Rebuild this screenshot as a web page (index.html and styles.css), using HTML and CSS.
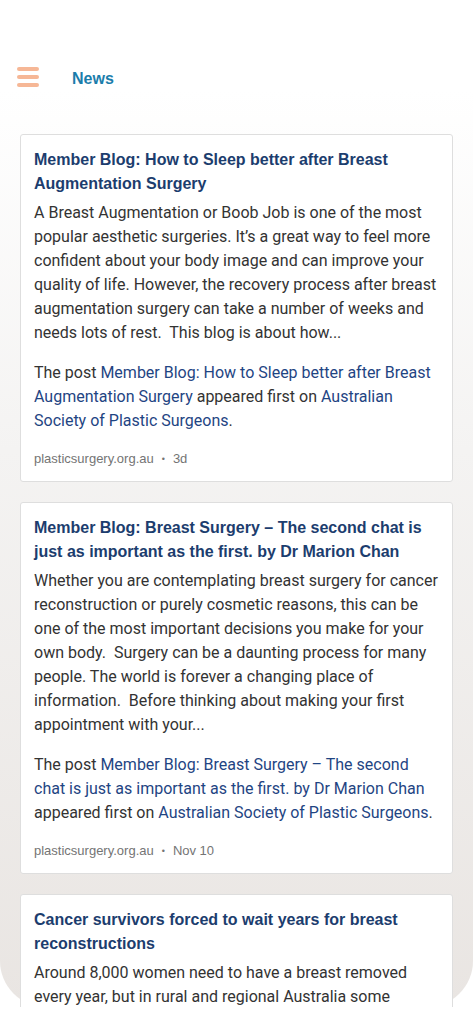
FILE: index.html
```html
<!DOCTYPE html>
<html lang="en">
<head>
<meta charset="utf-8">
<title>News</title>
<link rel="stylesheet" href="styles.css">
</head>
<body>
<div class="app">
  <header class="topbar">
    <span class="burger" aria-label="Menu"><i></i><i></i><i></i></span>
    <h1 class="page-title">News</h1>
  </header>
  <main class="feed">
    <article class="card">
      <h2 class="card-title">Member Blog: How to Sleep better after Breast Augmentation Surgery</h2>
      <p class="card-text">A Breast Augmentation or Boob Job is one of the most popular aesthetic surgeries. It’s a great way to feel more confident about your body image and can improve your quality of life. However, the recovery process after breast augmentation surgery can take a number of weeks and needs lots of rest.&nbsp; This blog is about how...</p>
      <p class="card-text post">The post <a href="#">Member Blog: How to Sleep better after Breast Augmentation Surgery</a> appeared first on <a href="#">Australian Society of Plastic Surgeons</a>.</p>
      <div class="meta"><span>plasticsurgery.org.au</span><span class="dot">•</span><span>3d</span></div>
    </article>
    <article class="card">
      <h2 class="card-title">Member Blog: Breast Surgery – The second chat is just as important as the first. by Dr Marion Chan</h2>
      <p class="card-text">Whether you are contemplating breast surgery for cancer reconstruction or purely cosmetic reasons, this can be one of the most important decisions you make for your own body.&nbsp; Surgery can be a daunting process for many people. The world is forever a changing place of information.&nbsp; Before thinking about making your first appointment with your...</p>
      <p class="card-text post">The post <a href="#">Member Blog: Breast Surgery – The second chat is just as important as the first. by Dr Marion Chan</a> appeared first on <a href="#">Australian Society of Plastic Surgeons</a>.</p>
      <div class="meta"><span>plasticsurgery.org.au</span><span class="dot">•</span><span>Nov 10</span></div>
    </article>
    <article class="card">
      <h2 class="card-title">Cancer survivors forced to wait years for breast reconstructions</h2>
      <p class="card-text">Around 8,000 women need to have a breast removed every year, but in rural and regional Australia some women must wait years for surgery if they're lucky enough to get it at all...</p>
    </article>
  </main>
</div>
</body>
</html>
```
FILE: styles.css
```css
html, body {
  margin: 0;
  padding: 0;
  background: #ffffff;
}
body {
  font-family: Roboto, "Liberation Sans", Arial, sans-serif;
  color: #333333;
}
.app {
  height: 1007px;
  background: linear-gradient(to bottom, #ffffff 0px, #ffffff 90px, #f4f3f2 450px, #e9e5e2 1007px);
  border-radius: 0 0 46px 46px;
}
.topbar {
  display: flex;
  align-items: center;
  height: 44px;
  padding: 56px 0 0 17px;
  margin: 0;
}
.burger {
  display: flex;
  flex-direction: column;
  justify-content: space-between;
  width: 22px;
  height: 20px;
  margin-top: -2px;
}
.burger i {
  display: block;
  height: 4px;
  border-radius: 2px;
  background: #f6b796;
}
.page-title {
  margin: 1px 0 0 33px;
  font-family: "Liberation Sans", Arial, sans-serif;
  font-weight: bold;
  font-size: 16px;
  color: #1b7dab;
}
.feed {
  display: flex;
  flex-direction: column;
  gap: 20px;
  padding: 34px 20px 0 20px;
}
.card {
  background: #ffffff;
  border: 1px solid #dedede;
  border-radius: 3px;
  padding: 13px 13px 14px 13px;
}
.card-title {
  margin: 0;
  font-family: "Liberation Sans", Arial, sans-serif;
  font-weight: bold;
  font-size: 16px;
  line-height: 24px;
  color: #1c3d6e;
}
.card-text {
  margin: 5px 0 0 0;
  font-size: 16px;
  line-height: 24px;
  color: #333333;
}
.card-text.post {
  margin-top: 16px;
}
.card-text a {
  color: #1f4583;
  text-decoration: none;
}
.meta {
  display: flex;
  align-items: center;
  margin-top: 18px;
  font-family: "Liberation Sans", Arial, sans-serif;
  font-size: 13px;
  line-height: 16px;
  color: #747474;
}
.meta .dot {
  margin: 0 8px 0 8px;
  font-size: 9px;
}
```
